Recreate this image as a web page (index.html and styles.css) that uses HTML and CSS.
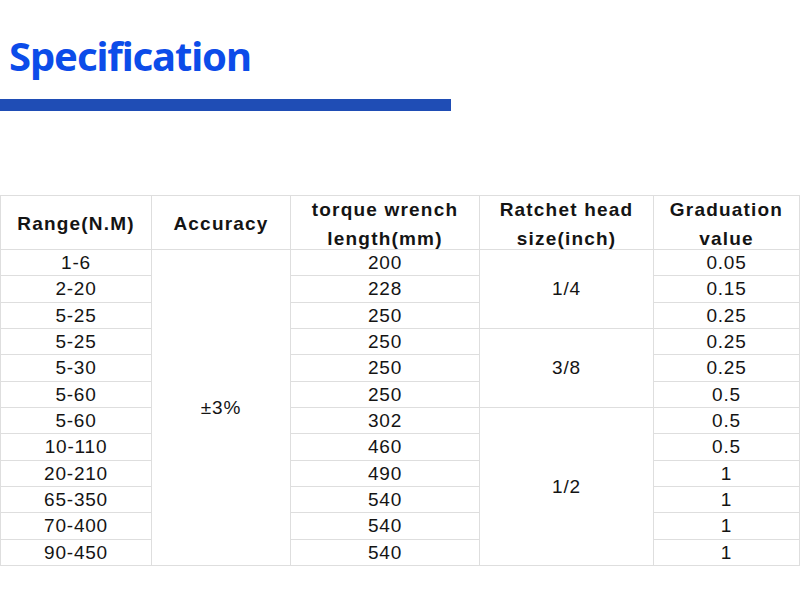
FILE: index.html
```html
<!DOCTYPE html>
<html>
<head>
<meta charset="utf-8">
<link rel="stylesheet" href="styles.css">
</head>
<body>
<div class="page">
  <h1 class="title">Specification</h1>
  <div class="bar"></div>
  <table class="spec">
    <colgroup>
      <col class="c1"><col class="c2"><col class="c3"><col class="c4"><col class="c5">
    </colgroup>
    <thead>
      <tr>
        <th><span class="hd">Range(N.M)</span></th>
        <th><span class="hd">Accuracy</span></th>
        <th><span class="hd">torque wrench<br>length(mm)</span></th>
        <th><span class="hd">Ratchet head<br>size(inch)</span></th>
        <th><span class="hd">Graduation<br>value</span></th>
      </tr>
    </thead>
    <tbody>
      <tr><td>1-6</td><td rowspan="12">±3%</td><td>200</td><td rowspan="3">1/4</td><td>0.05</td></tr>
      <tr><td>2-20</td><td>228</td><td>0.15</td></tr>
      <tr><td>5-25</td><td>250</td><td>0.25</td></tr>
      <tr><td>5-25</td><td>250</td><td rowspan="3">3/8</td><td>0.25</td></tr>
      <tr><td>5-30</td><td>250</td><td>0.25</td></tr>
      <tr><td>5-60</td><td>250</td><td>0.5</td></tr>
      <tr><td>5-60</td><td>302</td><td rowspan="6">1/2</td><td>0.5</td></tr>
      <tr><td>10-110</td><td>460</td><td>0.5</td></tr>
      <tr><td>20-210</td><td>490</td><td>1</td></tr>
      <tr><td>65-350</td><td>540</td><td>1</td></tr>
      <tr><td>70-400</td><td>540</td><td>1</td></tr>
      <tr><td>90-450</td><td>540</td><td>1</td></tr>
    </tbody>
  </table>
</div>
</body>
</html>
```

FILE: styles.css
```css
html, body {
  margin: 0;
  padding: 0;
  background: #ffffff;
}
.page {
  width: 800px;
  height: 600px;
  overflow: hidden;
}
.title {
  margin: 0;
  padding: 36px 0 0 9px;
  font-family: "Noto Sans", "Open Sans", sans-serif;
  font-weight: 700;
  font-size: 40px;
  line-height: 40px;
  letter-spacing: -1.1px;
  color: #0c4ce9;
}
.bar {
  margin-top: 23px;
  width: 451px;
  height: 12px;
  background: #1f4db5;
}
.spec {
  margin-top: 84px;
  width: 799px;
  table-layout: fixed;
  border-collapse: collapse;
  font-family: "Liberation Sans", Arial, sans-serif;
  color: #141414;
}
.c1 { width: 151px; }
.c2 { width: 139px; }
.c3 { width: 189px; }
.c4 { width: 174px; }
.c5 { width: 146px; }
.spec th, .spec td {
  border: 1px solid #dedede;
  padding: 0;
  text-align: center;
  vertical-align: middle;
}
.spec th {
  height: 53px;
  font-size: 19px;
  font-weight: 700;
  letter-spacing: 1.2px;
}
.hd {
  display: block;
  line-height: 28.5px;
  margin-bottom: -4px;
}
.spec td {
  height: 24.33px;
  padding-top: 1px;
  font-size: 19px;
  letter-spacing: 0.8px;
  line-height: 22px;
}
```
